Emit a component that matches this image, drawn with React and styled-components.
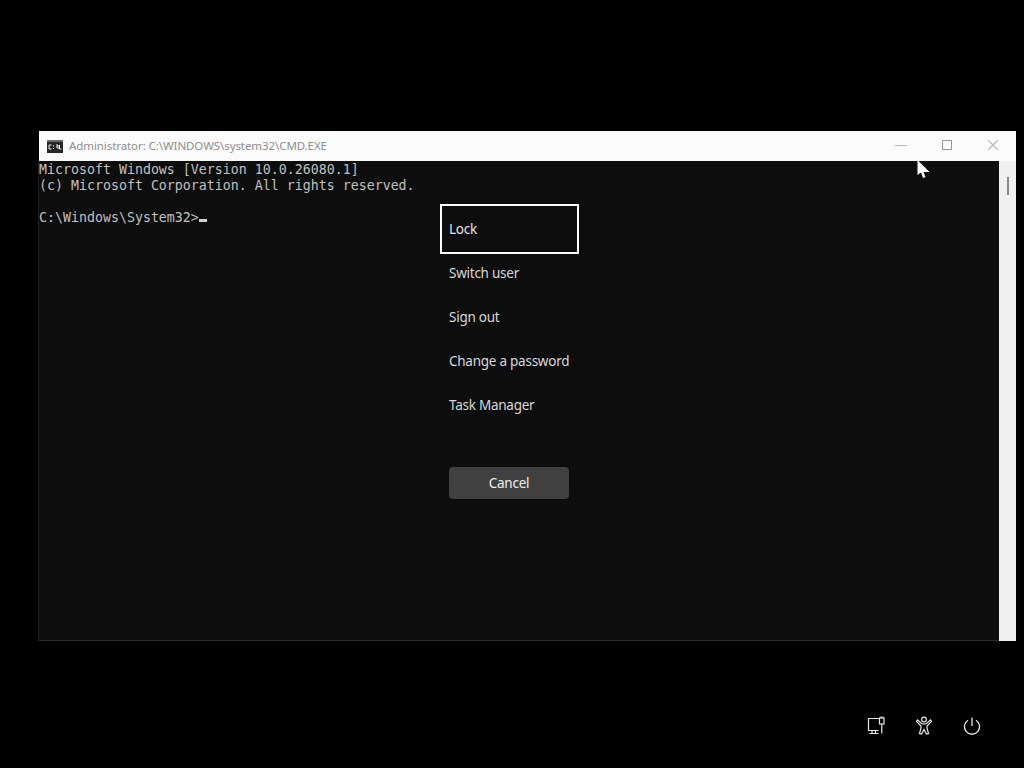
import React from "react"
import styled, { createGlobalStyle } from "styled-components"

const GlobalStyle = createGlobalStyle`
	html, body {
		margin: 0;
		padding: 0;
		background: #000;
	}
`

const Screen = styled.div`
	position: relative;
	display: flex;
	flex-direction: column;
	width: 1024px;
	height: 768px;
	overflow: hidden;
	background: #000;
`

const ConsoleWindow = styled.div`
	display: flex;
	flex-direction: column;
	width: 977px;
	height: 510px;
	margin: 131px 0 0 39px;
`

const TitleBar = styled.div`
	display: flex;
	align-items: center;
	height: 30px;
	flex: none;
	padding-left: 8px;
	background: #fbfbfb;
`

const TitleText = styled.span`
	margin-left: 6px;
	font: 11.5px/16px "Noto Sans", sans-serif;
	letter-spacing: -0.08px;
	color: #8f8f8f;
`

const WindowControls = styled.div`
	display: flex;
	align-items: center;
	gap: 34px;
	margin-left: auto;
	padding-right: 17px;
	color: #b9b9b9;
`

const ConsoleBody = styled.div`
	display: flex;
	flex: 1;
	min-height: 0;
`

const Terminal = styled.pre`
	flex: 1;
	margin: 0;
	margin-left: -1px;
	padding-top: 1px;
	background: #0d0d0d;
	border-bottom: 1px solid #2a2a2a;
	border-left: 1px solid #1c1c1c;
	font: 13.28px/16px "DejaVu Sans Mono", monospace;
	letter-spacing: 0.005px;
	color: #c0c0c0;
`

const Caret = styled.span`
	display: inline-block;
	width: 8px;
	height: 3px;
	background: #d0d0d0;
`

const ScrollBar = styled.div`
	width: 17px;
	flex: none;
	padding: 16px 0 0 8px;
	box-sizing: border-box;
	background: #f0f0f0;
`

const ScrollThumb = styled.div`
	width: 2px;
	height: 18px;
	background: #8a8a8a;
`

const SecurityMenu = styled.div`
	position: absolute;
	left: 440px;
	top: 204px;
	display: flex;
	flex-direction: column;
	width: 139px;
`

const MenuItem = styled.div`
	display: flex;
	align-items: center;
	box-sizing: border-box;
	height: 44px;
	padding-left: 9px;
	font: 13.5px/20px "Noto Sans", sans-serif;
	letter-spacing: -0.25px;
	white-space: nowrap;
	color: #d8d8d8;

	${({ $focused }) =>
		$focused &&
		`
		height: 50px;
		margin-bottom: -3px;
		padding-left: 7px;
		border: 2px solid #fff;
		color: #e4e4e4;
	`}
`

const CancelButton = styled.div`
	display: flex;
	align-items: center;
	justify-content: center;
	width: 120px;
	height: 32px;
	margin: 40px 0 0 9px;
	border-radius: 4px;
	background: #404040;
	font: 13.5px/20px "Noto Sans", sans-serif;
	letter-spacing: -0.25px;
	color: #f0f0f0;
`

const Footer = styled.div`
	display: flex;
	align-items: center;
	justify-content: flex-end;
	gap: 24px;
	margin-top: 73px;
	padding-right: 40px;
	color: #e6e6e6;
`

const Pointer = styled.svg`
	position: absolute;
	left: 917px;
	top: 160px;
`

const ConsoleIcon = () => (
	<svg width="16" height="13" viewBox="0 0 16 13">
		<rect width="16" height="13" fill="#262626" />
		<rect width="16" height="2" fill="#6a6a6a" />
		<path d="M2 5H4.5M2 5V9H4.5M6 6H7M6 8.5H7M9 5H11V9M9 7H11M12.5 5V9H14.5" stroke="#eee" strokeWidth="1" fill="none" />
	</svg>
)

const MinimizeIcon = () => (
	<svg width="12" height="12" viewBox="0 0 12 12">
		<path d="M0 5.5H12" stroke="currentColor" fill="none" />
	</svg>
)

const MaximizeIcon = () => (
	<svg width="12" height="12" viewBox="0 0 12 12">
		<rect x="1.5" y="0.5" width="9" height="9" stroke="#9a9a9a" fill="none" />
	</svg>
)

const CloseIcon = () => (
	<svg width="12" height="12" viewBox="0 0 12 12">
		<path d="M1 0L11 10M11 0L1 10" stroke="currentColor" strokeWidth="1.2" fill="none" />
	</svg>
)

const NetworkIcon = () => (
	<svg width="24" height="24" viewBox="0 0 24 24" fill="none" stroke="currentColor" strokeWidth="1.2">
		<path d="M14.5 16.5H4.5V4.5H15" />
		<path d="M8 16.5V19.5M11.5 16.5V19.5M5.5 19.5H14.5" />
		<rect x="15.5" y="4" width="4.5" height="6" />
		<path d="M17 2.5V4M18.7 2.5V4M17.8 10V19.5" />
	</svg>
)

const AccessibilityIcon = () => (
	<svg width="24" height="24" viewBox="0 0 24 24" fill="none" stroke="currentColor" strokeWidth="1.2">
		<circle cx="12" cy="5.5" r="2.4" />
		<path d="M5.5 6L9.5 9.5Q12 10.5 14.5 9.5L18.5 6L19.5 7.5L15 12V14L16.5 19.5L14.5 20L12 15.5L9.5 20L7.5 19.5L9 14V12L4.5 7.5Z" />
	</svg>
)

const PowerIcon = () => (
	<svg width="24" height="24" viewBox="0 0 24 24" fill="none" stroke="currentColor" strokeWidth="1.3">
		<path d="M12 3.5V12" />
		<path d="M8 6.2A7.6 7.6 0 1 0 16 6.2" />
	</svg>
)

const App = () => (
	<>
		<GlobalStyle />
		<Screen>
			<ConsoleWindow>
				<TitleBar>
					<ConsoleIcon />
					<TitleText>Administrator: C:\WINDOWS\system32\CMD.EXE</TitleText>
					<WindowControls>
						<MinimizeIcon />
						<MaximizeIcon />
						<CloseIcon />
					</WindowControls>
				</TitleBar>
				<ConsoleBody>
					<Terminal>
						{"Microsoft Windows [Version 10.0.26080.1]\n(c) Microsoft Corporation. All rights reserved.\n\nC:\\Windows\\System32>"}
						<Caret />
					</Terminal>
					<ScrollBar>
						<ScrollThumb />
					</ScrollBar>
				</ConsoleBody>
			</ConsoleWindow>
			<SecurityMenu>
				<MenuItem $focused>Lock</MenuItem>
				<MenuItem>Switch user</MenuItem>
				<MenuItem>Sign out</MenuItem>
				<MenuItem>Change a password</MenuItem>
				<MenuItem>Task Manager</MenuItem>
				<CancelButton>Cancel</CancelButton>
			</SecurityMenu>
			<Footer>
				<NetworkIcon />
				<AccessibilityIcon />
				<PowerIcon />
			</Footer>
			<Pointer width="13" height="19" viewBox="0 0 13 19">
				<path d="M0.5 0V15L4 12.5L6 18L8.5 17L6.5 12H12.5Z" fill="#fff" />
			</Pointer>
		</Screen>
	</>
)

export default App
